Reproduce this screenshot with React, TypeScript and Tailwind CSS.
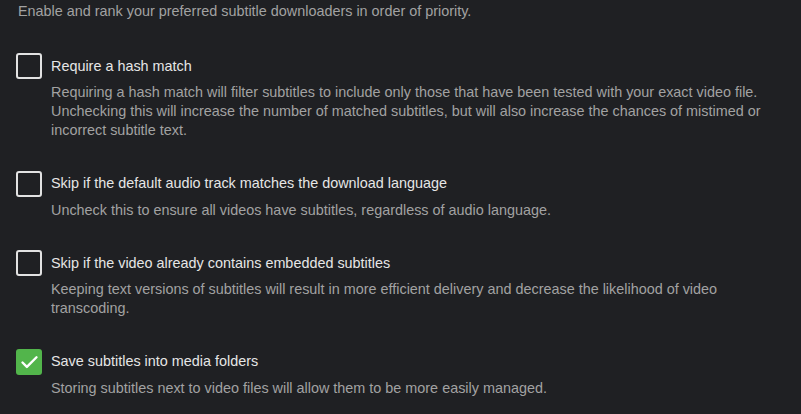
import { Check } from "lucide-react";

type Option = {
  label: string;
  description: string;
  checked: boolean;
};

const options: Option[] = [
  {
    label: "Require a hash match",
    description:
      "Requiring a hash match will filter subtitles to include only those that have been tested with your exact video file. Unchecking this will increase the number of matched subtitles, but will also increase the chances of mistimed or incorrect subtitle text.",
    checked: false,
  },
  {
    label: "Skip if the default audio track matches the download language",
    description: "Uncheck this to ensure all videos have subtitles, regardless of audio language.",
    checked: false,
  },
  {
    label: "Skip if the video already contains embedded subtitles",
    description:
      "Keeping text versions of subtitles will result in more efficient delivery and decrease the likelihood of video transcoding.",
    checked: false,
  },
  {
    label: "Save subtitles into media folders",
    description: "Storing subtitles next to video files will allow them to be more easily managed.",
    checked: true,
  },
];

function CheckboxField({ label, description, checked }: Option) {
  return (
    <div>
      <label className="flex items-center gap-[9px] cursor-pointer">
        {checked ? (
          <span className="flex h-[26px] w-[26px] shrink-0 items-center justify-center rounded-[3px] bg-[#52b54b]">
            <Check className="mt-[2px] h-[21px] w-[21px] text-white" strokeWidth={2.75} />
          </span>
        ) : (
          <span className="h-[26px] w-[26px] shrink-0 rounded-[3px] border-2 border-[#e2e2e2]" />
        )}
        <span className="text-[14.4px] leading-[19px] text-[#e6e6e6]">{label}</span>
      </label>
      <p className="mt-[4px] pl-[35px] text-[14.4px] leading-[19px] text-[#a2a2a2]">{description}</p>
    </div>
  );
}

export default function App() {
  return (
    <div
      className="min-h-screen bg-[#1f2023] pl-4 pr-4 pt-[2px]"
      style={{ fontFamily: '"Liberation Sans", Arial, sans-serif' }}
    >
      <p className="mb-[32px] pl-[2px] text-[14.4px] leading-[19px] text-[#a2a2a2]">
        Enable and rank your preferred subtitle downloaders in order of priority.
      </p>
      <div className="flex flex-col gap-[30.5px]">
        {options.map((o) => (
          <CheckboxField key={o.label} {...o} />
        ))}
      </div>
    </div>
  );
}
